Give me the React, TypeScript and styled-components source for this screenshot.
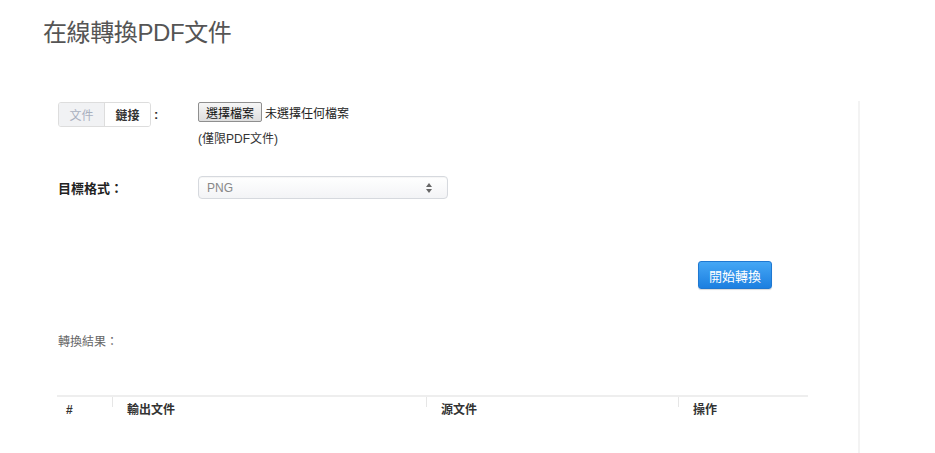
import { createGlobalStyle, styled } from "styled-components";

const GlobalStyle = createGlobalStyle`
  html, body {
    margin: 0;
    padding: 0;
    background: #fff;
  }
  body {
    font-family: "Liberation Sans", "Noto Sans CJK TC", sans-serif;
    color: #333;
    font-size: 12px;
  }
`;

const columns = [
  { key: "#", width: 55 },
  { key: "輸出文件", width: 314 },
  { key: "源文件", width: 252 },
  { key: "操作", width: 130 },
];

const App = () => {
  return (
    <Page>
      <GlobalStyle />
      <Title>在線轉換PDF文件</Title>
      <Panel>
        <FormRow>
          <LabelCell>
            <Tabs>
              <Tab $active>文件</Tab>
              <Tab>鏈接</Tab>
            </Tabs>
            <Colon>:</Colon>
          </LabelCell>
          <div>
            <FileLine>
              <FileButton type="button">選擇檔案</FileButton>
              <span>未選擇任何檔案</span>
            </FileLine>
            <Hint>(僅限PDF文件)</Hint>
          </div>
        </FormRow>

        <FormRow $top={29} $center>
          <FieldLabel>目標格式：</FieldLabel>
          <SelectWrap>
            <Select defaultValue="PNG">
              <option>PNG</option>
              <option>JPG</option>
            </Select>
            <SelectArrows viewBox="0 0 6 10" width="6" height="10">
              <path d="M3 0 L6 4 L0 4 Z" fill="#666" />
              <path d="M3 10 L6 6 L0 6 Z" fill="#666" />
            </SelectArrows>
          </SelectWrap>
        </FormRow>

        <ActionRow>
          <ConvertButton type="button">開始轉換</ConvertButton>
        </ActionRow>

        <ResultLabel>轉換結果：</ResultLabel>

        <ResultTable>
          <colgroup>
            {columns.map((c) => (
              <col key={c.key} style={{ width: c.width }} />
            ))}
          </colgroup>
          <thead>
            <tr>
              {columns.map((c, i) => (
                <HeadCell key={c.key} $first={i === 0}>
                  {c.key}
                </HeadCell>
              ))}
            </tr>
          </thead>
        </ResultTable>
      </Panel>
    </Page>
  );
};

const Page = styled.div`
  width: 935px;
  height: 453px;
  overflow: hidden;
`;

const Title = styled.h1`
  margin: 0;
  padding: 18px 0 0 43px;
  font-size: 24px;
  line-height: 30px;
  font-weight: normal;
  color: #555;
  letter-spacing: -0.4px;
`;

const Panel = styled.div`
  margin: 53px 0 0 58px;
  width: 800px;
  height: 360px;
  padding-top: 1px;
  border-right: 2px solid #f3f3f3;
`;

const FormRow = styled.div<{ $top?: number; $center?: boolean }>`
  display: grid;
  grid-template-columns: 140px 1fr;
  align-items: ${(p) => (p.$center ? "center" : "start")};
  margin-top: ${(p) => p.$top ?? 0}px;
`;

const LabelCell = styled.div`
  display: flex;
  align-items: center;
`;

const Tabs = styled.div`
  display: flex;
  border: 1px solid #ddd;
  border-radius: 3px;
  overflow: hidden;
`;

const Tab = styled.span<{ $active?: boolean }>`
  display: flex;
  align-items: center;
  justify-content: center;
  width: 45px;
  height: 23px;
  font-size: 12px;
  font-weight: ${(p) => (p.$active ? "normal" : "bold")};
  color: ${(p) => (p.$active ? "#a9b0bf" : "#333")};
  background: ${(p) => (p.$active ? "#f1f2f4" : "#fff")};
  & + & {
    border-left: 1px solid #ddd;
  }
`;

const Colon = styled.span`
  margin-left: 3px;
  font-size: 13px;
  font-weight: bold;
  color: #333;
`;

const FileLine = styled.div`
  display: flex;
  align-items: center;
  gap: 3px;
  font-size: 12px;
  color: #222;
`;

const FileButton = styled.button`
  height: 20px;
  width: 64px;
  padding: 0;
  font-family: inherit;
  font-size: 12px;
  color: #111;
  border: 1px solid #8f8f8f;
  border-radius: 2px;
  background: linear-gradient(#f6f6f6, #dedede);
`;

const Hint = styled.div`
  margin-top: 9px;
  line-height: 16px;
  font-size: 12px;
  color: #333;
`;

const FieldLabel = styled.span`
  font-size: 13px;
  font-weight: bold;
  color: #222;
`;

const SelectWrap = styled.div`
  position: relative;
  width: 250px;
`;

const Select = styled.select`
  appearance: none;
  width: 250px;
  height: 23px;
  padding: 0 8px;
  font-family: inherit;
  font-size: 12px;
  color: #888;
  border: 1px solid #d6d9de;
  border-radius: 4px;
  background: linear-gradient(#fff, #f3f4f6);
  box-shadow: inset 0 1px 1px rgba(0, 0, 0, 0.04);
  outline: none;
`;

const SelectArrows = styled.svg`
  position: absolute;
  right: 16px;
  top: 7px;
  pointer-events: none;
`;

const ActionRow = styled.div`
  display: flex;
  justify-content: flex-end;
  width: 714px;
  margin-top: 62px;
`;

const ConvertButton = styled.button`
  width: 74px;
  height: 28px;
  padding: 0;
  font-family: inherit;
  font-size: 13px;
  color: #fff;
  border: 1px solid #1f78d1;
  border-radius: 3px;
  background: linear-gradient(#45a7f5, #1c7fe0);
  box-shadow: 0 1px 1px rgba(0, 0, 0, 0.15);
`;

const ResultLabel = styled.div`
  margin-top: 45px;
  line-height: 16px;
  font-size: 12px;
  color: #666;
`;

const ResultTable = styled.table`
  margin: 45px 0 0 -1px;
  width: 751px;
  table-layout: fixed;
  border-collapse: collapse;
  border-top: 2px solid #eee;
`;

const HeadCell = styled.th<{ $first?: boolean }>`
  position: relative;
  box-sizing: border-box;
  padding: 5px 15px 8px;
  padding-left: ${(p) => (p.$first ? 9 : 15)}px;
  line-height: 16px;
  text-align: left;
  font-size: 12px;
  font-weight: bold;
  color: #333;
  &::before {
    content: "";
    display: ${(p) => (p.$first ? "none" : "block")};
    position: absolute;
    left: 0;
    top: 0;
    height: 10px;
    border-left: 1px solid #e6e6e6;
  }
`;

export default App;
